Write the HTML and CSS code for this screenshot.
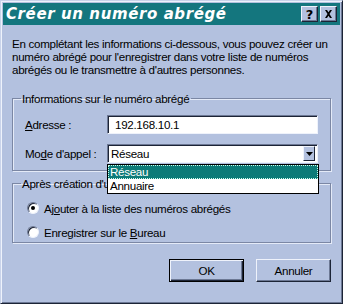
FILE: index.html
```html
<!DOCTYPE html>
<html lang="fr">

<head>
  <meta charset="UTF-8">
  <meta name="viewport" content="width=device-width, initial-scale=1.0">
  <title>Créer un numéro abrégé</title>
  <link rel="stylesheet" href="styles.css">
</head>

<body>
  <div class="window">
    <div class="titlebar">
      <span class="title">Créer un numéro abrégé</span>
      <span class="tb-btn">?</span>
      <span class="tb-btn close">
        <svg width="9" height="8" viewBox="0 0 9 8"><path d="M1 0h2l1.5 2.2L6 0h2L5.5 4 8 8H6L4.5 5.8 3 8H1l2.5-4z" fill="#000"/></svg>
      </span>
    </div>

    <div class="content">
      <p class="intro">En complétant les informations ci-dessous, vous pouvez créer un numéro abrégé pour l'enregistrer dans votre liste de numéros abrégés ou le transmettre à d'autres personnes.</p>

      <fieldset class="group info">
        <legend>Informations sur le numéro abrégé</legend>
        <div class="row">
          <span class="label"><u>A</u>dresse :</span>
          <span class="field">192.168.10.1</span>
        </div>
        <div class="row">
          <span class="label">Mo<u>d</u>e d'appel :</span>
          <span class="field combo">
            <span class="combo-text">Réseau</span>
            <span class="arrow">
              <svg width="7" height="4" viewBox="0 0 7 4"><path d="M0 0h7L3.5 4z" fill="#000"/></svg>
            </span>
          </span>
          <div class="dropdown">
            <div class="option selected">Réseau</div>
            <div class="option">Annuaire</div>
          </div>
        </div>
      </fieldset>

      <fieldset class="group after">
        <legend>Après création d'un numéro abrégé</legend>
        <label class="radio"><span class="dot checked"></span><span>Aj<u>o</u>uter à la liste des numéros abrégés</span></label>
        <label class="radio"><span class="dot"></span><span>Enregistrer sur le <u>B</u>ureau</span></label>
      </fieldset>

      <div class="buttons">
        <span class="btn default">OK</span>
        <span class="btn">Annuler</span>
      </div>
    </div>
  </div>
</body>

</html>
```

FILE: styles.css
```css
body {
  margin: 0;
  font-family: "Liberation Sans", Arial, sans-serif;
  font-size: 11.6px;
  letter-spacing: -0.3px;
  color: #000;
}
.window {
  box-sizing: border-box;
  width: 343px;
  height: 304px;
  background: #b3c1df;
  border: 1px solid;
  border-color: #c9d3ea #1c2436 #1c2436 #c9d3ea;
  box-shadow: inset 1px 1px 0 #eef2fb, inset -1px -1px 0 #6c7894;
  padding: 2px;
  display: flex;
  flex-direction: column;
}
.titlebar {
  height: 22px;
  background: #14767e;
  display: flex;
  align-items: center;
  padding: 0 3px 0 3px;
  gap: 2px;
}
.title {
  flex: 1;
  color: #fff;
  font-family: "DejaVu Sans", Verdana, sans-serif;
  font-weight: bold;
  font-style: italic;
  font-size: 15px;
  letter-spacing: 0.6px;
}
.tb-btn {
  box-sizing: border-box;
  width: 17px;
  height: 16px;
  background: #b3c1df;
  border: 1px solid;
  border-color: #eef2fb #1c2436 #1c2436 #eef2fb;
  box-shadow: inset -1px -1px 0 #6c7894;
  display: flex;
  align-items: center;
  justify-content: center;
  font-family: "DejaVu Sans", Verdana, sans-serif;
  font-weight: bold;
  font-size: 13px;
  letter-spacing: 0;
  line-height: 1;
}
.content {
  padding: 0 9px 0 9px;
}
.intro {
  margin: 12px 0 0 0;
  line-height: 13px;
}
.group {
  margin: 0;
  border: 1px solid #7b87a4;
  box-shadow: 1px 1px 0 #e4eaf7, inset 1px 1px 0 #e4eaf7;
  position: relative;
  padding-left: 0;
  padding-right: 0;
}
.group legend {
  margin-left: 8px;
  padding: 0 2px 0 1px;
  line-height: 13px;
}
.info {
  margin-top: 16px;
  padding-top: 10px;
  padding-bottom: 7px;
}
.row {
  display: flex;
  align-items: center;
  height: 19px;
  margin-left: 12px;
  position: relative;
}
.row + .row {
  margin-top: 10px;
}
.label {
  width: 82px;
}
.field {
  box-sizing: border-box;
  width: 211px;
  height: 19px;
  background: #fff;
  border: 1px solid;
  border-color: #6c7894 #eef2fb #eef2fb #6c7894;
  box-shadow: inset 1px 1px 0 #1c2436;
  padding: 2px 0 0 7px;
  line-height: 14px;
}
.combo {
  display: flex;
  justify-content: space-between;
  padding: 1px 2px 0 3px;
}
.combo-text {
  padding-top: 1px;
}
.arrow {
  box-sizing: border-box;
  width: 12px;
  height: 15px;
  background: #b3c1df;
  border: 1px solid;
  border-color: #eef2fb #1c2436 #1c2436 #eef2fb;
  display: flex;
  align-items: center;
  justify-content: center;
}
.dropdown {
  position: absolute;
  left: 82px;
  top: 20px;
  width: 212px;
  box-sizing: border-box;
  background: #fff;
  border: 1px solid #000;
  z-index: 2;
  line-height: 14px;
}
.option {
  padding: 0 0 0 2px;
  height: 14px;
}
.selected {
  background: #0d7b78;
  color: #fff;
  outline: 1px dotted #cfe;
  outline-offset: -1px;
}
.after {
  margin-top: 6px;
  padding-top: 11px;
  padding-bottom: 3px;
}
.radio {
  display: flex;
  align-items: center;
  height: 14px;
  margin-left: 14px;
  gap: 5px;
}
.radio + .radio {
  margin-top: 10px;
}
.dot {
  box-sizing: border-box;
  width: 12px;
  height: 12px;
  border-radius: 50%;
  background: #fff;
  border: 1px solid;
  border-color: #6c7894 #eef2fb #eef2fb #6c7894;
  box-shadow: inset 1px 1px 0 #1c2436;
  position: relative;
}
.checked::after {
  content: "";
  position: absolute;
  left: 3px;
  top: 3px;
  width: 4px;
  height: 4px;
  border-radius: 50%;
  background: #000;
}
.buttons {
  display: flex;
  justify-content: flex-end;
  gap: 12px;
  margin-top: 16px;
}
.btn {
  box-sizing: border-box;
  width: 75px;
  height: 23px;
  display: flex;
  align-items: center;
  justify-content: center;
  border: 1px solid;
  border-color: #eef2fb #1c2436 #1c2436 #eef2fb;
  box-shadow: inset -1px -1px 0 #6c7894;
}
.default {
  border-color: #000;
  box-shadow: inset 1px 1px 0 #eef2fb, inset -1px -1px 0 #1c2436, inset -2px -2px 0 #6c7894;
}
```
